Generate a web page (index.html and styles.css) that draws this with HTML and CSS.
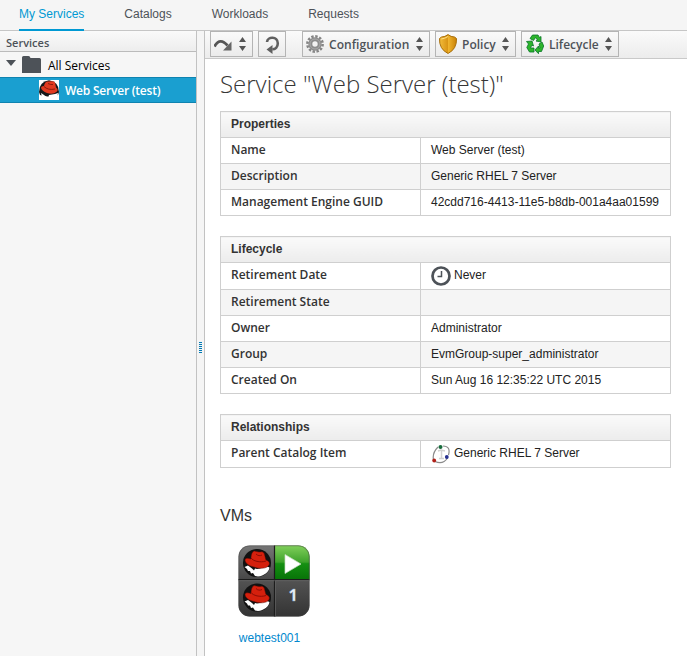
FILE: index.html
```html
<!DOCTYPE html>
<html lang="en">
<head>
<meta charset="utf-8">
<title>My Services</title>
<link rel="stylesheet" href="styles.css">
</head>
<body>
<svg class="defs" aria-hidden="true">
  <defs>
    <linearGradient id="gold" x1="0" x2="1"><stop offset="0" stop-color="#f3bd3c"/><stop offset=".5" stop-color="#d99414"/><stop offset=".52" stop-color="#f0b42e"/><stop offset="1" stop-color="#c98207"/></linearGradient>
    <linearGradient id="green" x1="0" y1="0" x2="0" y2="1"><stop offset="0" stop-color="#83d15c"/><stop offset=".5" stop-color="#3fa32c"/><stop offset=".55" stop-color="#159012"/><stop offset="1" stop-color="#087408"/></linearGradient>
    <linearGradient id="gray" x1="0" y1="0" x2="0" y2="1"><stop offset="0" stop-color="#777"/><stop offset=".47" stop-color="#484848"/><stop offset=".5" stop-color="#525252"/><stop offset="1" stop-color="#333"/></linearGradient>
    <symbol id="hat" viewBox="0 0 28 28">
      <path fill="#fff" d="M1.500 18 5 16.500l4 3 2 2 1-2 2 .5 3-.5 6-2.500 3.500 1.500C26 23 21 27 15 27.500l-3-.5-2-3-2 .5-1-2.500-2 0-1-2z"/>
      <path fill="#d5200d" stroke="#5e0b04" stroke-width=".5" d="M8 9c0-3 1-6 3-7 2 0 3 1 5 1s3-1 5 1c1 2 1 5 2 7 3 1 4 3 3 5-2 4-10 4-15 2-5-1-9-4-9-7 0-2 3-2 6-1z"/>
      <path fill="none" stroke="#8d0d05" stroke-width="1" d="M8 9c2 3 9 5 15 3M13 5c2 2 4 2 6 1"/>
    </symbol>
    <symbol id="updown" viewBox="0 0 7 14"><path d="M0 5 3.500 0 7 5zM0 9h7l-3.500 5z"/></symbol>
  </defs>
</svg>
<nav class="nav">
  <a class="nav-item active">My Services</a>
  <a class="nav-item">Catalogs</a>
  <a class="nav-item">Workloads</a>
  <a class="nav-item">Requests</a>
</nav>
<div class="body">
  <aside class="side">
    <div class="side-title">Services</div>
    <div class="tree-row">
      <svg class="caret" viewBox="0 0 10 6"><path d="M0 0h10L5 6z"/></svg>
      <svg class="folder" viewBox="0 0 19 17"><path d="M0 1.500Q0 0 1.500 0h5Q8 0 8.500 2H17.500Q19 2 19 3.500V17H0z"/></svg>
      <span>All Services</span>
    </div>
    <div class="tree-row selected">
      <span class="hatbox"><svg viewBox="0 0 20 20"><path d="M0 12Q0 2 10 .3 20 2 20 12l-1 3-7 2-7-1-4-1z" fill="#15181a"/><path d="M2 13l3 2 4 3 1-3 6-1 3-1-1 6H4l-1-2z" fill="#fff"/><path d="M5 6q1-5 4-4.500 6-1 7 1l1 5q2.500 2 1 4-4 3.500-10 1.500-5-2-6-5Q2 6 5 6z" fill="#e03a20"/><path d="M5 6.500q4 4 11 2.500M9 3.500q3 1.500 5 1" fill="none" stroke="#82180b" stroke-width=".9"/></svg></span>
      <span class="selected-name">Web Server (test)</span>
    </div>
  </aside>
  <div class="splitter"><span class="grip"></span></div>
  <main class="main">
    <div class="toolbar">
      <button class="btn b-share"><svg class="i-share" viewBox="0 0 18 13"><path d="M.5 8.500C4 1.500 9 2 13.500 7.500" fill="none" stroke="#555" stroke-width="2.800"/><path d="M17.500 3.500V12.500H9z" fill="#666"/></svg><svg class="ud"><use href="#updown"/></svg></button>
      <button class="btn b-reload"><svg class="i-reload" viewBox="0 0 15 18"><path d="M2 6C2.500.2 12.800.2 12.800 7.300c0 4-2.500 6-5.500 6" fill="none" stroke="#606060" stroke-width="2.600"/><path d="M1.500 13.500l6-4.500V18z" fill="#606060"/></svg></button>
      <button class="btn b-config"><svg class="i-gear" viewBox="0 0 18 18"><circle cx="9" cy="9" r="7.600" fill="none" stroke="#858585" stroke-width="2.600" stroke-dasharray="2.400 1.580"/><circle cx="9" cy="9" r="4.700" fill="none" stroke="#8d8d8d" stroke-width="4"/><circle cx="9" cy="9" r="5" fill="none" stroke="#aaa" stroke-width="1"/></svg><span>Configuration</span><svg class="ud"><use href="#updown"/></svg></button>
      <button class="btn b-policy"><svg class="i-shield" viewBox="0 0 18 20"><path d="M9 .6Q12 3 15.500 3l2 1.500Q18 15 9 19.500 0 15 .5 4.500L2.500 3Q6 3 9 .6z" fill="url(#gold)" stroke="#a86e0a"/><path d="M9 2.500Q6 4.500 2.300 5" fill="none" stroke="#ffe28a"/></svg><span>Policy</span><svg class="ud"><use href="#updown"/></svg></button>
      <button class="btn b-life"><svg class="i-recycle" viewBox="0 0 18 20"><g fill="#2db52c" stroke="#087528" stroke-width=".8"><path d="M4 4.500 6.500 1h5.500l1.500 2.500L15 2.500V8L10 7l1.500-1L9.500 3.500 7.500 6.500z"/><path d="M.5 7.500 6 7l1.500 5-1.700-.8L4.500 14 8 14v4H3.500L.8 13.500l1.700-3.500z"/><path d="M13 10l3-2 1.700 4L15.500 17.500H12.500v2.200L9 16l3.500-4v2H14z"/></g></svg><span>Lifecycle</span><svg class="ud"><use href="#updown"/></svg></button>
    </div>
    <div class="content">
      <h1>Service "Web Server (test)"</h1>
      <table>
        <colgroup><col class="c-key"><col></colgroup>
        <tr><th colspan="2">Properties</th></tr>
        <tr><td class="k">Name</td><td>Web Server (test)</td></tr>
        <tr class="alt"><td class="k">Description</td><td>Generic RHEL 7 Server</td></tr>
        <tr><td class="k">Management Engine GUID</td><td>42cdd716-4413-11e5-b8db-001a4aa01599</td></tr>
      </table>
      <table>
        <colgroup><col class="c-key"><col></colgroup>
        <tr><th colspan="2">Lifecycle</th></tr>
        <tr class="tall"><td class="k">Retirement Date</td><td><div class="with-icon"><svg class="i20" viewBox="0 0 20 20"><circle cx="10" cy="10" r="8.500" fill="#fff" stroke="#4d5258" stroke-width="2.700"/><path d="M10.500 5v5.500H6.500" fill="none" stroke="#4d5258" stroke-width="1.500"/></svg><span>Never</span></div></td></tr>
        <tr class="alt"><td class="k">Retirement State</td><td></td></tr>
        <tr><td class="k">Owner</td><td>Administrator</td></tr>
        <tr class="alt"><td class="k">Group</td><td>EvmGroup-super_administrator</td></tr>
        <tr><td class="k">Created On</td><td>Sun Aug 16 12:35:22 UTC 2015</td></tr>
      </table>
      <table>
        <colgroup><col class="c-key"><col></colgroup>
        <tr><th colspan="2">Relationships</th></tr>
        <tr class="tall"><td class="k">Parent Catalog Item</td><td><div class="with-icon"><svg class="i20" viewBox="0 0 20 20"><path d="M7 3Q1 9 2.500 16M4 17.500Q12 21 16.500 14M12 2Q20 2 17.500 11" fill="none" stroke="#8b8b8b" stroke-width="1.200"/><path d="M7 7l3-1 4 1M10.500 6v8M8 14.500h5" fill="none" stroke="#d0d0d0" stroke-width="1.500"/><circle cx="9.500" cy="3" r="2" fill="#176b3c"/><circle cx="3.200" cy="16.500" r="1.900" fill="#b01f18"/><circle cx="15.800" cy="13" r="1.900" fill="#26308f"/></svg><span>Generic RHEL 7 Server</span></div></td></tr>
      </table>
      <h2>VMs</h2>
      <div class="vm">
        <svg class="vm-icon" viewBox="0 0 72 72">
          <clipPath id="tile"><rect x=".5" y=".5" width="71" height="71" rx="11"/></clipPath>
          <g clip-path="url(#tile)">
            <rect width="72" height="72" fill="url(#gray)"/>
            <rect x="37" width="36" height="34" fill="url(#green)"/>
            <path d="M36.500 0v72M0 34.500h72" stroke="#1c1c1c" stroke-width="1.200"/>
            <path d="M0 35.700h72M37.500 36v36" stroke="#6a6a6a" stroke-width=".6"/>
            <circle cx="19" cy="18" r="14" fill="#111"/><circle cx="19" cy="52.500" r="14" fill="#111"/>
            <use href="#hat" x="5" y="4" width="28" height="28"/><use href="#hat" x="5" y="38.500" width="28" height="28"/>
            <path d="M47 9.500v19L63 19z" fill="#fff" stroke="#c8dcc4" stroke-width=".7"/>
          </g>
          <rect x=".8" y=".8" width="70.400" height="70.400" rx="11" fill="none" stroke="#444" stroke-opacity=".45"/>
          <text x="55" y="55.500" text-anchor="middle" class="count">1</text>
        </svg>
        <a class="vm-name">webtest001</a>
      </div>
    </div>
  </main>
</div>
</body>
</html>
```
FILE: styles.css
```css
* { box-sizing: border-box; }
body { margin: 0; width: 687px; height: 656px; overflow: hidden; display: flex; flex-direction: column; background: #fff; color: #222; font: 12px "Liberation Sans", Arial, sans-serif; }
svg { display: block; flex: none; }
.defs { position: absolute; width: 0; height: 0; }
.nav { display: flex; flex: none; height: 31px; padding-left: 19px; gap: 40px; background: #f5f5f5; border-bottom: 1px solid #c6c6c6; }
.nav-item { height: 31px; padding-top: 7px; line-height: 14px; color: #4d5258; font-size: 12px; }
.nav-item.active { color: #0099d3; border-bottom: 2px solid #0099d3; }
.body { display: flex; flex: 1; min-height: 0; }
.side { width: 196px; background: #f6f6f6; font-family: "Open Sans", sans-serif; }
.side-title { height: 21px; padding-left: 6px; border-bottom: 1px solid #bbb; background: linear-gradient(#fafafa, #ededed); color: #4d5258; font-size: 11px; font-weight: 600; line-height: 23px; }
.tree-row { display: flex; align-items: center; height: 25px; padding-left: 6px; color: #000; font-size: 12px; line-height: 25px; }
.tree-row span { position: relative; top: 1px; }
.caret { width: 10px; height: 6px; margin: -3px 6px 0 0; fill: #4d5258; }
.folder { width: 19px; height: 17px; margin-right: 7px; fill: #4d5258; }
.tree-row.selected { height: 26px; padding-left: 39px; background: #1a9fd0; border-top: 1px solid #0f83b0; border-bottom: 1px solid #0f83b0; color: #fff; font-weight: 600; }
.tree-row .hatbox { top: 0; width: 20px; height: 20px; margin-right: 6px; background: #fff; }
.tree-row .selected-name { top: 0; letter-spacing: -.22px; }
.splitter { display: flex; align-items: flex-start; justify-content: center; width: 9px; padding-top: 311px; border: solid #c2c2c2; border-width: 0 1px; background: #f5f5f5; }
.grip { width: 3px; height: 11px; background: repeating-linear-gradient(#0079b5 0 1px, #f5f5f5 1px 2px); }
.main { flex: 1; min-width: 0; }
.toolbar { display: flex; align-items: flex-start; height: 28px; padding-left: 5px; border-bottom: 1px solid #c9c9c9; background: linear-gradient(#fafafa, #ececec); }
.btn { display: flex; align-items: center; height: 26px; margin: 0 5px 0 0; padding: 0; border: 1px solid #b4b4b4; background: linear-gradient(#fafafa, #ebebeb); color: #4d5258; font: 600 12px/24px "Open Sans", sans-serif; }
.btn span { position: relative; top: 1px; }
.ud { width: 7px; height: 14px; margin: -1px 0 0 auto; fill: #555; }
.b-share { width: 43px; padding: 0 6px 0 3px; }
.b-reload { width: 28px; padding-left: 6px; margin-right: 16px; }
.b-config { width: 128px; padding: 0 6px 0 3px; }
.b-config span { letter-spacing: .05px; }
.b-policy { width: 81px; padding: 0 6px 0 3px; }
.b-life { width: 98px; padding: 0 6px 0 4px; }
.i-share { width: 18px; height: 13px; }
.i-reload { width: 15px; height: 18px; margin-top: 2px; }
.i-gear { width: 18px; height: 18px; margin-right: 5px; }
.i-shield { width: 18px; height: 20px; margin-right: 5px; }
.i-recycle { width: 18px; height: 20px; margin-right: 5px; }
.content { padding: 9px 16px 0 15px; }
h1 { margin: 0 0 10px; height: 33px; color: #363636; font: 300 24px/32px "Open Sans", sans-serif; white-space: nowrap; }
table { width: 451px; margin: 0 0 20px; border-collapse: collapse; table-layout: fixed; }
.c-key { width: 200px; }
th, td { height: 26px; padding: 0 10px; border: 1px solid #cfcfcf; text-align: left; line-height: 25px; white-space: nowrap; vertical-align: top; }
th { background: linear-gradient(#fafafa, #ececec); color: #333; font-weight: bold; }
td.k { color: #333; font-family: "Open Sans", sans-serif; font-weight: 600; line-height: 23px; }
.alt td { background: #f5f5f5; }
.tall td { height: 27px; }
.with-icon { display: flex; gap: 3px; }
.i20 { width: 20px; height: 20px; margin-top: 3px; }
h2 { margin: 38px 0 0; font-size: 16px; font-weight: normal; line-height: 20px; color: #333; }
.vm { display: flex; flex-direction: column; align-items: center; width: 99px; margin-top: 19px; }
.vm-icon { width: 72px; height: 72px; margin: 0 0 0 8px; }
.vm-name { margin-top: 13px; color: #0088ce; line-height: 16px; }
.count { fill: #e8eef5; stroke: #7fa0c8; stroke-width: .3; font: bold 16px "Open Sans", sans-serif; }
```
